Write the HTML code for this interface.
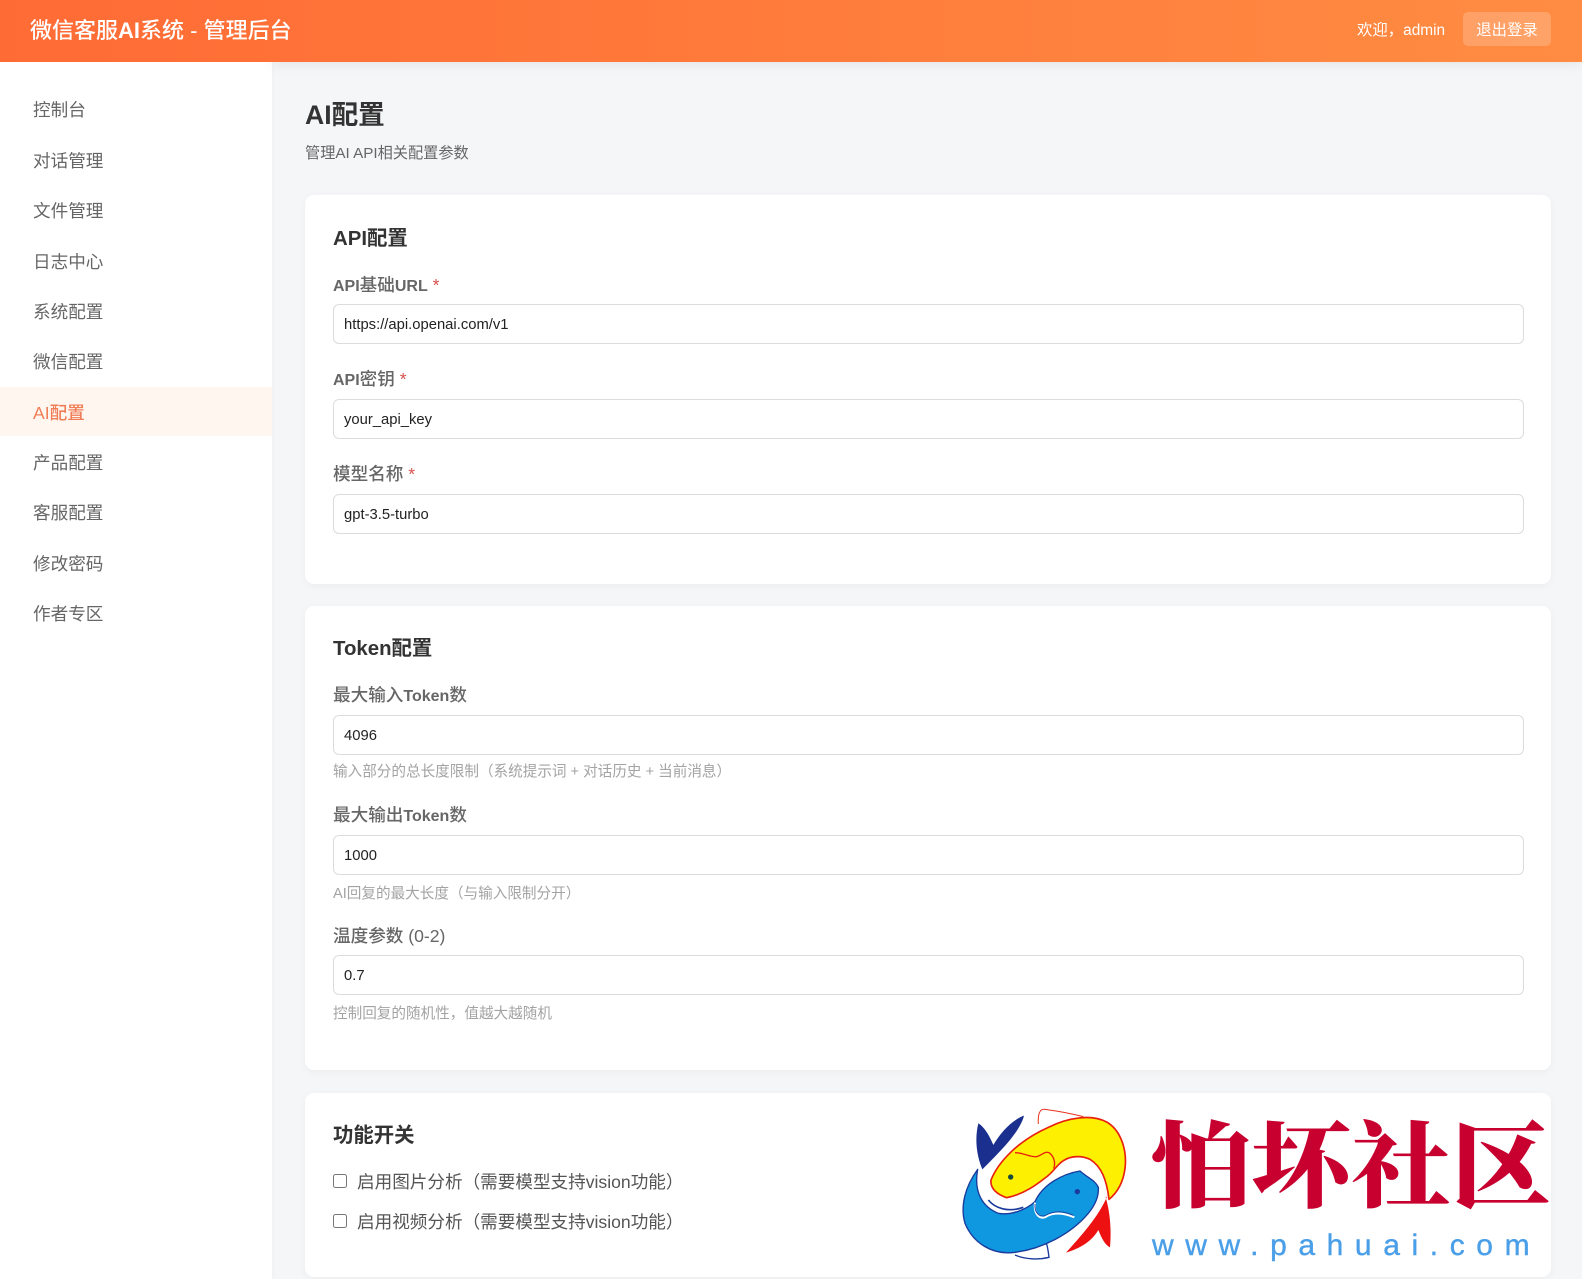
<!DOCTYPE html>
<html lang="zh-CN"><head><meta charset="utf-8"><title>微信客服AI系统 - 管理后台</title>
<style>
*{box-sizing:border-box}
html,body{margin:0;padding:0;width:1582px;height:1279px;overflow:hidden;background:#f5f6f8}
body{position:relative;font-family:"Liberation Sans","Noto Sans CJK SC",sans-serif}
.a,.t{position:absolute;white-space:nowrap}
.head{left:0;top:0;width:1582px;height:62px;background:linear-gradient(90deg,#ff6b35,#ff8c42);z-index:3}
.hs{left:272px;top:0;width:1310px;height:62px;box-shadow:0 2px 12px rgba(0,0,0,.08);z-index:2}
.side{left:0;top:62px;width:272px;height:1217px;background:#fff;box-shadow:1px 0 4px rgba(0,0,0,.03)}
.nav{left:33px;font-size:17.6px;line-height:24px;color:#666}
.card{left:305px;width:1246px;background:#fff;border-radius:9px;box-shadow:0 2px 9px rgba(0,0,0,.04)}
.h2{left:333px;font-size:20.4px;line-height:28px;font-weight:700;color:#333}
.lb{left:333px;font-size:17.6px;line-height:24px;font-weight:500;color:#666}
.lb b{font-size:16px;font-weight:700;color:#666}
.lb i{font-style:normal;color:#d9534f}
input.in{position:absolute;left:333px;width:1191px;height:40px;border:1px solid #dcdcdc;border-radius:6px;background:#fff;padding:2px 10px 0;margin:0;font:14.8px "Liberation Sans",sans-serif;color:#222;outline:0}
.hint{left:333px;font-size:14.6px;line-height:20px;color:#a3a3a3}
input.cb{position:absolute;left:333px;width:14px;height:14px;margin:0}
.ck{left:357px;font-size:17.6px;line-height:24px;color:#555}
</style></head><body>
<div class="a hs"></div>
<div class="a head">
<div class="t" style="left:30px;top:15px;font-size:22px;line-height:32px;font-weight:500;color:#fff">微信客服<b>AI</b>系统 - 管理后台</div>
<div class="t" style="left:1357px;top:20px;font-size:15.4px;line-height:22px;color:#fff">欢迎，admin</div>
<div class="a" style="left:1463px;top:12px;width:88px;height:34px;border-radius:5px;background:rgba(255,255,255,.2);color:#fff;font-size:15.4px;line-height:37px;text-align:center">退出登录</div>
</div>
<div class="a side"></div>
<div class="t nav" style="top:98px">控制台</div>
<div class="t nav" style="top:149px">对话管理</div>
<div class="t nav" style="top:199px">文件管理</div>
<div class="t nav" style="top:250px">日志中心</div>
<div class="t nav" style="top:300px">系统配置</div>
<div class="t nav" style="top:350px">微信配置</div>
<div class="a" style="left:0;top:387px;width:272px;height:49px;background:#fff6f0"></div>
<div class="t nav" style="top:401px;color:#ef7d56;font-weight:500">AI配置</div>
<div class="t nav" style="top:451px">产品配置</div>
<div class="t nav" style="top:501px">客服配置</div>
<div class="t nav" style="top:552px">修改密码</div>
<div class="t nav" style="top:602px">作者专区</div>

<div class="t" style="left:305px;top:97px;font-size:26.6px;line-height:36px;font-weight:700;color:#333">AI配置</div>
<div class="t" style="left:305px;top:143px;font-size:15.2px;line-height:22px;color:#666">管理AI API相关配置参数</div>

<div class="a card" style="top:195px;height:389px"></div>
<div class="t h2" style="top:225px">API配置</div>
<div class="t lb" style="top:273px"><b>API</b>基础<b>URL</b> <i>*</i></div>
<input class="in" style="top:304px" value="https://api.openai.com/v1">
<div class="t lb" style="top:367px"><b>API</b>密钥 <i>*</i></div>
<input class="in" style="top:399px" value="your_api_key">
<div class="t lb" style="top:462px">模型名称 <i>*</i></div>
<input class="in" style="top:494px" value="gpt-3.5-turbo">

<div class="a card" style="top:606px;height:464px"></div>
<div class="t h2" style="top:635px">Token配置</div>
<div class="t lb" style="top:683px">最大输入<b>Token</b>数</div>
<input class="in" style="top:715px" value="4096">
<div class="t hint" style="top:762px">输入部分的总长度限制（系统提示词 + 对话历史 + 当前消息）</div>
<div class="t lb" style="top:803px">最大输出<b>Token</b>数</div>
<input class="in" style="top:835px" value="1000">
<div class="t hint" style="top:884px">AI回复的最大长度（与输入限制分开）</div>
<div class="t lb" style="top:924px">温度参数 (0-2)</div>
<input class="in" style="top:955px" value="0.7">
<div class="t hint" style="top:1004px">控制回复的随机性，值越大越随机</div>

<div class="a card" style="top:1093px;height:184px"></div>
<div class="t h2" style="top:1122px">功能开关</div>
<input class="cb" type="checkbox" style="top:1174px">
<div class="t ck" style="top:1170px">启用图片分析（需要模型支持vision功能）</div>
<input class="cb" type="checkbox" style="top:1214px">
<div class="t ck" style="top:1210px">启用视频分析（需要模型支持vision功能）</div>

<svg class="a" style="left:955px;top:1100px" width="190" height="170" viewBox="0 0 570 510">
<path d="M250,72C248,40 255,26 270,28C300,32 340,38 385,50" fill="none" stroke="#e8301f" stroke-width="3"/>
<path d="M180,465C210,478 250,480 282,472C280,455 278,440 274,430" fill="none" stroke="#1a3a9c" stroke-width="4"/>
<path d="M108,240C130,185 190,122 280,82C340,52 410,42 455,66C497,90 517,150 510,205C505,245 490,275 462,298C455,240 440,200 405,178C385,168 350,165 325,182C305,195 300,210 278,228C250,250 210,282 155,293C125,283 105,265 108,240Z" fill="#fdf000" stroke="#e8200f" stroke-width="5" stroke-linejoin="round"/>
<path d="M180,158C205,158 225,172 245,170C262,166 270,150 285,160C298,172 302,190 296,206" fill="none" stroke="#e8200f" stroke-width="4"/>
<circle cx="167" cy="231" r="8" fill="#164a3c"/>
<path d="M456,290C435,340 395,390 333,458C375,445 410,425 430,390C440,415 450,435 465,442C470,390 465,335 452,292Z" fill="#ee1111"/>
<path d="M70,70C88,80 105,110 115,135C135,100 170,60 207,47C195,95 140,150 82,208C62,160 60,110 70,70Z" fill="#1a2f8e"/>
<path d="M68,208C30,260 15,320 30,370C55,430 110,462 170,458C260,450 350,400 400,340C418,318 432,290 430,262C420,240 400,235 375,213C320,222 262,255 240,305C215,328 170,347 130,340C85,322 55,280 68,208Z" fill="#0f97e0" stroke="#1a3a9c" stroke-width="4" stroke-linejoin="round"/>
<path d="M100,300C120,325 160,338 205,322" fill="none" stroke="#1a3a9c" stroke-width="5"/>
<path d="M240,308C236,335 248,358 270,352C295,335 325,338 358,352" fill="none" stroke="#fff" stroke-width="6"/>
<path d="M240,312C238,335 250,352 270,347C295,332 325,332 355,346" fill="none" stroke="#1a3a9c" stroke-width="2.5"/>
<circle cx="367" cy="275" r="8" fill="#1a3a9c"/>
</svg>
<div class="t" style="left:1151px;top:1101px;font-family:'Liberation Serif','Noto Serif CJK SC',serif;font-size:100px;line-height:130px;font-weight:900;color:#c8002f;transform:scaleY(.94);transform-origin:50% 82%">怕坏社区</div>
<div class="t" style="left:1152px;top:1226px;font-size:30px;line-height:40px;letter-spacing:11.6px;color:#4a9fe8;-webkit-text-stroke:.4px #4a9fe8">www.pahuai.com</div>
</body></html>
